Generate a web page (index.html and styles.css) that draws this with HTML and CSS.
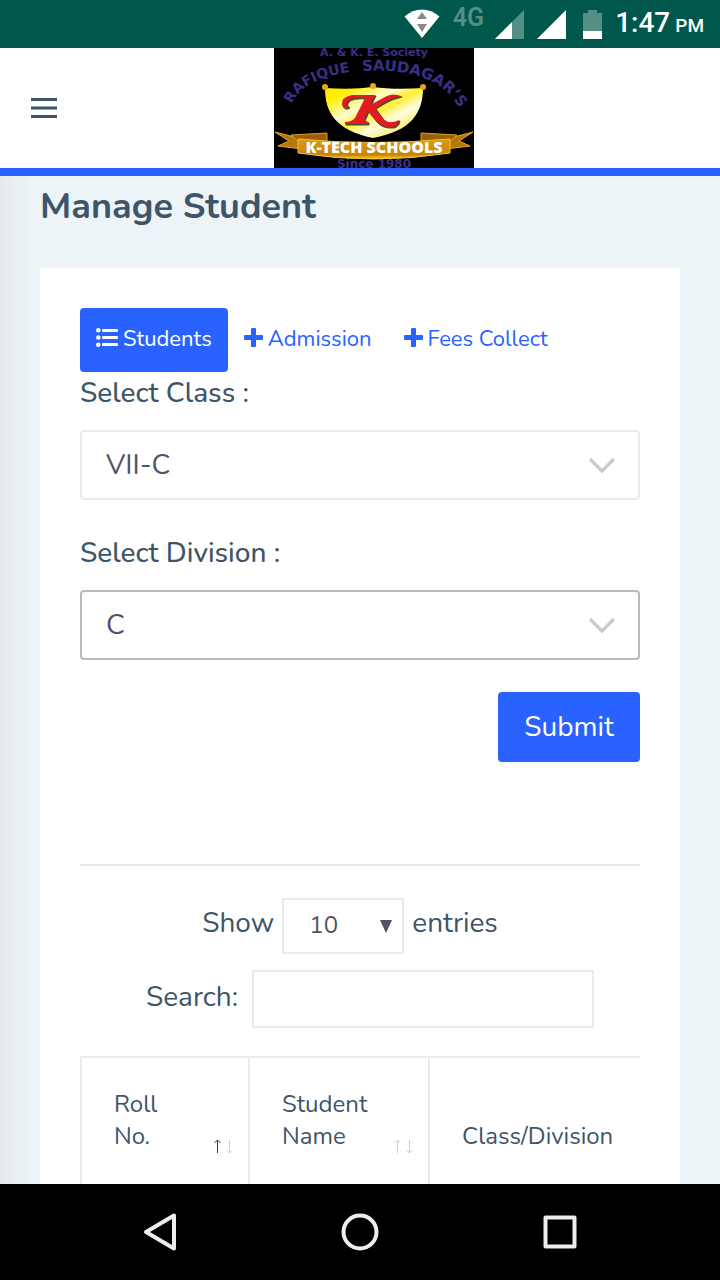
FILE: index.html
```html
<!DOCTYPE html>
<html lang="en">
<head>
<meta charset="utf-8">
<meta name="viewport" content="width=device-width, initial-scale=1">
<title>Manage Student</title>
<link rel="stylesheet" href="styles.css">
</head>
<body>
<div class="status-bar">
  <svg class="status-wifi" width="36" height="30" viewBox="0 0 36 30" aria-hidden="true">
    <path d="M0.500 7.500C11-2 25-2 35.500 7.500L18 29Z" fill="#fff"/>
    <path d="M18 3l5 7H13zM18 23l5-8H13z" fill="#8a8a8a"/>
  </svg>
  <span class="status-network">4G</span>
  <svg class="status-signal" width="29" height="29" viewBox="0 0 29 29" aria-hidden="true">
    <path d="M29 0V29H0Z" fill="#558f84"/><path d="M17 12V29H0Z" fill="#fff"/>
  </svg>
  <svg class="status-signal" width="29" height="29" viewBox="0 0 29 29" aria-hidden="true"><path d="M29 0V29H0Z" fill="#fff"/></svg>
  <svg class="status-battery" width="19" height="29" viewBox="0 0 19 29" aria-hidden="true">
    <path d="M5 0h9v3h5v26H0V3h5z" fill="#558f84"/><path d="M0 21h19v8H0z" fill="#fff"/>
  </svg>
  <span class="status-time">1:47<small>PM</small></span>
</div>

<header class="top-bar">
  <button class="menu-button" type="button" aria-label="Menu">
    <svg width="26" height="22" viewBox="0 0 26 22" aria-hidden="true"><path d="M0 2.500h26M0 11h26M0 19.500h26" stroke="#3e5569" stroke-width="3"/></svg>
  </button>
  <svg class="logo" width="200" height="120" viewBox="0 0 200 120" role="img" aria-label="K-Tech Schools">
    <defs>
      <linearGradient id="shield" x1="0" y1="0" x2="1" y2="1">
        <stop offset="0" stop-color="#ffe600"/><stop offset=".15" stop-color="#fff000"/><stop offset=".38" stop-color="#fffbd0"/>
        <stop offset=".5" stop-color="#ffef30"/><stop offset=".65" stop-color="#fffce0"/><stop offset="1" stop-color="#f5dc00"/>
      </linearGradient>
      <linearGradient id="ribbon" x1="0" y1="0" x2="0" y2="1">
        <stop offset="0" stop-color="#d99a17"/><stop offset=".8" stop-color="#c88408"/><stop offset="1" stop-color="#ffd52a"/>
      </linearGradient>
      <path id="arc-left" d="M18 56Q28 31 76 24"/>
      <path id="arc-right" d="M88 23Q166 18 187 64"/>
    </defs>
    <rect width="200" height="120" fill="#000"/>
    <g fill="#3a2f86" class="logo-text">
      <text x="100" y="8" font-size="11" text-anchor="middle" class="logo-wide">A. &amp; K. E. Society</text>
      <text font-size="14"><textPath href="#arc-left">RAFIQUE</textPath></text>
      <text font-size="15"><textPath href="#arc-right">SAUDAGAR’S</textPath></text>
      <text x="100" y="120" font-size="12" text-anchor="middle">Since 1980</text>
    </g>
    <path d="M51 40Q78 42 99 39Q120 42 149 40C149 64 138 83 99 90C61 82 51 64 51 40Z" fill="url(#shield)"/>
    <g fill="#e6a817"><circle cx="51" cy="39" r="3"/><circle cx="99" cy="38" r="3"/><circle cx="149" cy="39" r="3"/></g>
    <g>
      <path transform="translate(1 1)" fill="#4a4a30" stroke="#4a4a30" d="M101 47L96 57 113 48Q119 45 127 48Q118 50 111 54L101 60 109 71Q115 77 125 72Q124 80 115 79Q107 79 102 73L94 63 90 72Q91 73 94 74V76H71V74Q78 74 81 70L91 50Q78 49 74 53Q71 57 75 59Q70 62 68 57Q67 49 78 47Z"/>
      <path fill="#e11b20" d="M101 47L96 57 113 48Q119 45 127 48Q118 50 111 54L101 60 109 71Q115 77 125 72Q124 80 115 79Q107 79 102 73L94 63 90 72Q91 73 94 74V76H71V74Q78 74 81 70L91 50Q78 49 74 53Q71 57 75 59Q70 62 68 57Q67 49 78 47Z"/>
    </g>
    <path d="M1 84L24 90 51 86V96L28 101 4 98 15 93ZM199 84L176 90 149 86V96L172 101 196 98 185 93Z" fill="#b8770b" stroke="#e7a824"/>
    <path d="M17 87L53 85V93L27 96ZM183 87L147 85V93L173 96Z" fill="#9c6108" stroke="#e0a020"/>
    <path d="M24 91Q100 98 176 91V105Q100 117 24 105Z" fill="url(#ribbon)" stroke="#f1c22c"/>
    <text x="100" y="105" font-size="16" text-anchor="middle" fill="#fff" class="logo-name">K-TECH SCHOOLS</text>
  </svg>
</header>

<main class="page">
  <h1 class="page-title">Manage Student</h1>
  <section class="card">
    <nav class="tabs">
      <a class="tab tab-active" href="#students">
        <svg width="22" height="19" viewBox="0 0 22 19" fill="currentColor" aria-hidden="true">
          <circle cx="2.300" cy="2.300" r="2.300"/><circle cx="2.300" cy="9.500" r="2.300"/><circle cx="2.300" cy="16.700" r="2.300"/>
          <rect x="6" y="1" width="16" height="3" rx="1"/><rect x="6" y="8" width="16" height="3" rx="1"/><rect x="6" y="15" width="16" height="3" rx="1"/>
        </svg>Students</a>
      <a class="tab" href="#admission">
        <svg width="19" height="19" viewBox="0 0 19 19" fill="currentColor" aria-hidden="true"><path d="M8 0h3q1 0 1 1v6h6q1 0 1 1v3q0 1-1 1h-6v6q0 1-1 1H8q-1 0-1-1v-6H1q-1 0-1-1V8q0-1 1-1h6V1q0-1 1-1z"/></svg>Admission</a>
      <a class="tab" href="#fees">
        <svg width="19" height="19" viewBox="0 0 19 19" fill="currentColor" aria-hidden="true"><path d="M8 0h3q1 0 1 1v6h6q1 0 1 1v3q0 1-1 1h-6v6q0 1-1 1H8q-1 0-1-1v-6H1q-1 0-1-1V8q0-1 1-1h6V1q0-1 1-1z"/></svg>Fees Collect</a>
    </nav>

    <form class="filter">
      <div class="field">
        <label for="class">Select Class :</label>
        <div class="select-box">
          <select id="class"><option>VII-C</option></select>
          <svg width="26" height="16" viewBox="0 0 26 16" aria-hidden="true"><path d="M1 2L13 14 25 2" fill="none" stroke="#c8cdd1" stroke-width="3.500"/></svg>
        </div>
      </div>
      <div class="field">
        <label for="division">Select Division :</label>
        <div class="select-box select-focused">
          <select id="division"><option>C</option></select>
          <svg width="26" height="16" viewBox="0 0 26 16" aria-hidden="true"><path d="M1 2L13 14 25 2" fill="none" stroke="#c8cdd1" stroke-width="3.500"/></svg>
        </div>
      </div>
      <button class="submit" type="button">Submit</button>
    </form>

    <hr class="divider">

    <div class="length-row">
      <label for="length">Show</label>
      <div class="length-box">
        <select id="length"><option>10</option></select>
        <svg width="12" height="13" viewBox="0 0 12 13" aria-hidden="true"><path d="M0 0h12L6 13z" fill="#4f5467"/></svg>
      </div>
      <span>entries</span>
    </div>
    <div class="search-row">
      <label for="search">Search:</label>
      <input id="search" type="search">
    </div>

    <div class="table-scroll">
      <table class="students">
        <colgroup><col class="col-roll"><col class="col-name"><col class="col-class"></colgroup>
        <thead>
          <tr>
            <th scope="col">Roll<br>No.
              <svg class="sort sort-asc" width="21" height="15" viewBox="0 0 21 15" aria-hidden="true"><path class="up" d="M4.500 14V1M1.500 4l3-3 3 3"/><path class="down" d="M16.500 1v13M13.500 11l3 3 3-3"/></svg>
            </th>
            <th scope="col">Student<br>Name
              <svg class="sort" width="21" height="15" viewBox="0 0 21 15" aria-hidden="true"><path class="up" d="M4.500 14V1M1.500 4l3-3 3 3"/><path class="down" d="M16.500 1v13M13.500 11l3 3 3-3"/></svg>
            </th>
            <th scope="col">Class/Division
              <svg class="sort" width="21" height="15" viewBox="0 0 21 15" aria-hidden="true"><path class="up" d="M4.500 14V1M1.500 4l3-3 3 3"/><path class="down" d="M16.500 1v13M13.500 11l3 3 3-3"/></svg>
            </th>
          </tr>
        </thead>
      </table>
    </div>
  </section>
</main>

<nav class="system-nav">
  <button type="button" aria-label="Back"><svg width="40" height="40" viewBox="0 0 40 40" aria-hidden="true"><path d="M34 3.500V36.500L6 20Z"/></svg></button>
  <button type="button" aria-label="Home"><svg width="40" height="40" viewBox="0 0 40 40" aria-hidden="true"><circle cx="20" cy="20" r="16.500"/></svg></button>
  <button type="button" aria-label="Recent apps"><svg width="40" height="40" viewBox="0 0 40 40" aria-hidden="true"><rect x="5.500" y="5.500" width="29" height="29"/></svg></button>
</nav>
</body>
</html>
```

FILE: styles.css
```css
* { box-sizing: border-box; }

body {
  margin: 0;
  height: 100vh;
  display: flex;
  flex-direction: column;
  overflow: hidden;
  background: #fff;
  color: #3e5569;
  font-family: Nunito, Lato, "Open Sans", sans-serif;
  font-size: 28px;
  line-height: 42px;
}

button, select, input { font: inherit; color: inherit; }
button { border: 0; padding: 0; cursor: pointer; }
svg { display: block; flex: none; }

.status-bar {
  flex: none;
  height: 48px;
  padding: 0 16px;
  display: flex;
  align-items: center;
  justify-content: flex-end;
  gap: 13px;
  background: #00574b;
  color: #fff;
  font-family: Roboto, sans-serif;
}
.status-network {
  color: #558f84;
  font-size: 25px;
  font-weight: 600;
  line-height: 24px;
  padding-bottom: 12px;
}
.status-signal { margin-left: -2px; margin-right: 2px; }
.status-battery { margin-left: 2px; }
.status-time {
  display: flex;
  align-items: baseline;
  gap: 5px;
  font-size: 28px;
  line-height: 48px;
  font-weight: 500;
}
.status-time small { font-size: 19px; }

.top-bar {
  flex: none;
  display: grid;
  grid-template-columns: 88px 1fr 60px;
  align-items: center;
  border-bottom: 8px solid #2962ff;
}
.menu-button {
  display: grid;
  place-items: center;
  height: 80px;
  background: none;
}
.logo { justify-self: center; }
.logo-text { font-family: "DejaVu Sans", sans-serif; font-weight: 700; }
.logo-name { font-family: "Open Sans", sans-serif; font-weight: 800; }

.page {
  flex: 1;
  min-height: 0;
  overflow: hidden;
  padding: 0 40px;
  background: linear-gradient(90deg, #e4e9ec, #e8eef2 16px, #ecf4f8 36px);
}
.page-title {
  margin: 0 0 30px;
  font-size: 36px;
  line-height: 62px;
  font-weight: 700;
}
.card { padding: 40px; background: #fff; }

.tabs { display: flex; }
.tab {
  display: flex;
  gap: 5px;
  height: 64px;
  padding: 20px 16px;
  border-radius: 4px;
  color: #2962ff;
  font-size: 22px;
  line-height: 22px;
  text-decoration: none;
  white-space: nowrap;
}
.tab-active { background: #2962ff; color: #fff; }

.filter { display: flex; flex-direction: column; }
.field { display: grid; gap: 16px; margin-bottom: 32px; }
.field label { font-weight: 500; }
.select-box { display: grid; align-items: center; }
.select-box select, .select-box svg { grid-area: 1 / 1; }
.select-box svg { justify-self: end; margin-right: 25px; pointer-events: none; }
.select-box select {
  width: 100%;
  height: 70px;
  padding: 0 24px;
  border: 2px solid #e9ecef;
  border-radius: 4px;
  background: #fff;
  color: #4f5467;
  appearance: none;
}
.select-focused select { border-color: #b9babb; }
.submit {
  align-self: flex-end;
  width: 142px;
  height: 70px;
  border-radius: 4px;
  background: #2962ff;
  color: #fff;
}

.divider { margin: 102px 0 32px; border: 0; border-top: 2px solid #e5e6e7; }

.length-row, .search-row { display: flex; justify-content: center; gap: 8px; }
.length-row { padding-right: 20px; line-height: 50px; }
.length-box { display: grid; align-items: center; }
.length-box select, .length-box svg { grid-area: 1 / 1; }
.length-box svg { justify-self: end; margin-right: 12px; pointer-events: none; }
.length-box select {
  width: 122px;
  height: 56px;
  padding: 0 25px 4px;
  border: 2px solid #e9ecef;
  border-radius: 0;
  background: #fff;
  color: #4f5467;
  font-size: 24px;
  appearance: none;
}
.search-row { gap: 14px; margin: 16px 0 28px; padding-left: 20px; line-height: 54px; }
.search-row input {
  width: 342px;
  height: 58px;
  padding: 0 16px;
  border: 2px solid #e9ecef;
  border-radius: 0;
  background: #fff;
  appearance: none;
}

.table-scroll { overflow: hidden; }
.students {
  width: 593px;
  table-layout: fixed;
  border-collapse: separate;
  border-spacing: 0;
  border-top: 2px solid #e9ecef;
  font-size: 24px;
  line-height: 32px;
}
.col-roll { width: 168px; }
.col-name { width: 180px; }
.col-class { width: 245px; }
.students th {
  position: relative;
  padding: 30px 32px 34px;
  border-left: 2px solid #e9ecef;
  font-weight: 400;
  text-align: left;
  vertical-align: bottom;
}
.sort {
  position: absolute;
  right: 14px;
  bottom: 32px;
  fill: none;
  stroke: #c9ced3;
  stroke-width: 1;
}
.sort-asc .up { stroke: #2b3f50; }

.system-nav {
  flex: none;
  height: 96px;
  padding: 0 60px;
  display: grid;
  grid-template-columns: repeat(3, 1fr);
  background: #000;
}
.system-nav button { display: grid; place-items: center; background: none; }
.system-nav svg { fill: none; stroke: #eee; stroke-width: 4; stroke-linejoin: round; }
```
